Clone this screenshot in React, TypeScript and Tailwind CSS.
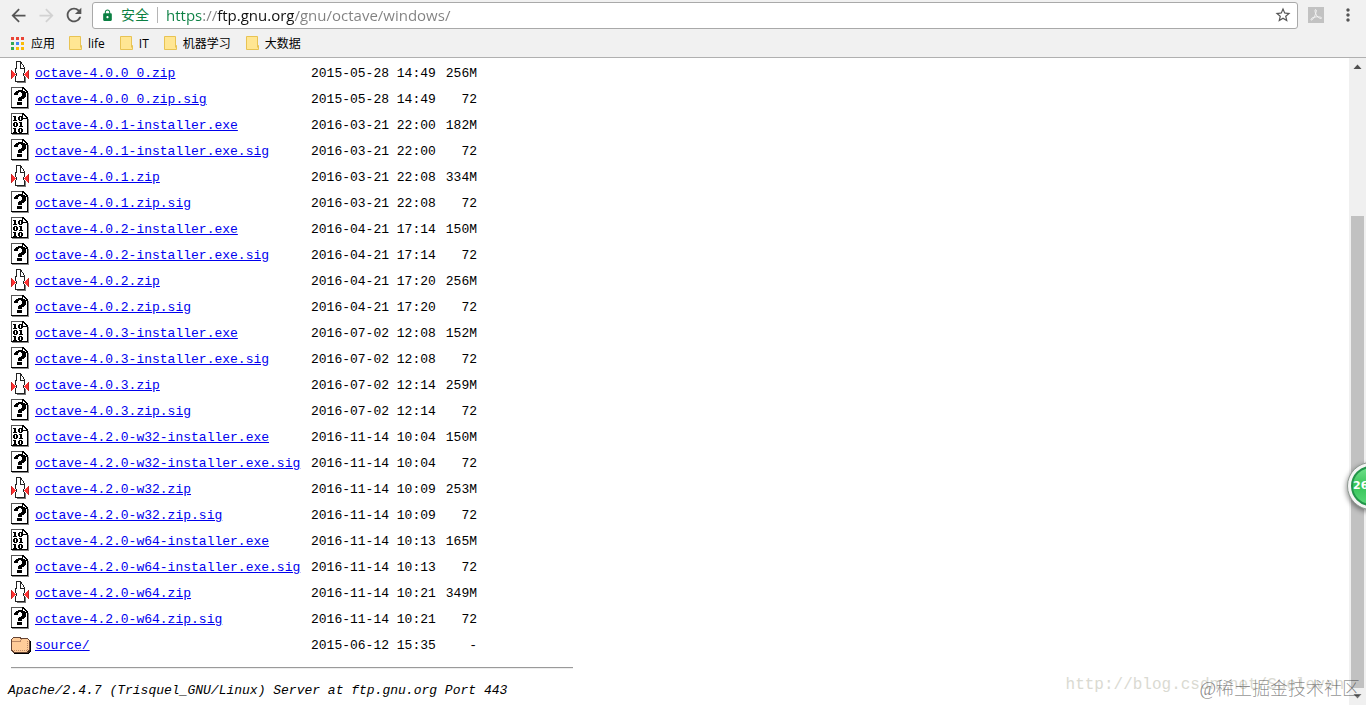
import type { ReactNode } from "react"
import { MdArrowBack, MdArrowForward, MdLock, MdMoreVert, MdRefresh, MdStarBorder } from "react-icons/md"

type Kind = "zip" | "sig" | "exe" | "dir"

interface Entry {
  name: string
  date: string
  size: string
  kind: Kind
}

const entries: Entry[] = [
  { name: "octave-4.0.0_0.zip", date: "2015-05-28 14:49", size: "256M", kind: "zip" },
  { name: "octave-4.0.0_0.zip.sig", date: "2015-05-28 14:49", size: "72", kind: "sig" },
  { name: "octave-4.0.1-installer.exe", date: "2016-03-21 22:00", size: "182M", kind: "exe" },
  { name: "octave-4.0.1-installer.exe.sig", date: "2016-03-21 22:00", size: "72", kind: "sig" },
  { name: "octave-4.0.1.zip", date: "2016-03-21 22:08", size: "334M", kind: "zip" },
  { name: "octave-4.0.1.zip.sig", date: "2016-03-21 22:08", size: "72", kind: "sig" },
  { name: "octave-4.0.2-installer.exe", date: "2016-04-21 17:14", size: "150M", kind: "exe" },
  { name: "octave-4.0.2-installer.exe.sig", date: "2016-04-21 17:14", size: "72", kind: "sig" },
  { name: "octave-4.0.2.zip", date: "2016-04-21 17:20", size: "256M", kind: "zip" },
  { name: "octave-4.0.2.zip.sig", date: "2016-04-21 17:20", size: "72", kind: "sig" },
  { name: "octave-4.0.3-installer.exe", date: "2016-07-02 12:08", size: "152M", kind: "exe" },
  { name: "octave-4.0.3-installer.exe.sig", date: "2016-07-02 12:08", size: "72", kind: "sig" },
  { name: "octave-4.0.3.zip", date: "2016-07-02 12:14", size: "259M", kind: "zip" },
  { name: "octave-4.0.3.zip.sig", date: "2016-07-02 12:14", size: "72", kind: "sig" },
  { name: "octave-4.2.0-w32-installer.exe", date: "2016-11-14 10:04", size: "150M", kind: "exe" },
  { name: "octave-4.2.0-w32-installer.exe.sig", date: "2016-11-14 10:04", size: "72", kind: "sig" },
  { name: "octave-4.2.0-w32.zip", date: "2016-11-14 10:09", size: "253M", kind: "zip" },
  { name: "octave-4.2.0-w32.zip.sig", date: "2016-11-14 10:09", size: "72", kind: "sig" },
  { name: "octave-4.2.0-w64-installer.exe", date: "2016-11-14 10:13", size: "165M", kind: "exe" },
  { name: "octave-4.2.0-w64-installer.exe.sig", date: "2016-11-14 10:13", size: "72", kind: "sig" },
  { name: "octave-4.2.0-w64.zip", date: "2016-11-14 10:21", size: "349M", kind: "zip" },
  { name: "octave-4.2.0-w64.zip.sig", date: "2016-11-14 10:21", size: "72", kind: "sig" },
  { name: "source/", date: "2015-06-12 15:35", size: "-", kind: "dir" },
]

const bookmarks = ["life", "IT", "机器学习", "大数据"]

function Page() {
  return (
    <>
      <path d="M1.5.5h11l5 5v15h-16z" fill="#fff" />
      <path d="M1.5 21V.5H13" fill="none" stroke="#555" />
      <path d="M1 20.5h16.5V5" fill="none" stroke="#000" />
      <path d="M2 21.5h16.5V6" fill="none" stroke="#888" />
      <path d="M12 0h1l5 5v1h-6z" fill="#000" />
      <path d="M13 2h1v1h1v1h1v1h-3z" fill="#fff" />
    </>
  )
}

function One({ x, y }: { x: number; y: number }) {
  return <path transform={`translate(${x} ${y})`} d="M0 0h3v4h1v1H0V4h1V1H0z" fill="#000" />
}

function Zero({ x, y }: { x: number; y: number }) {
  return (
    <path
      transform={`translate(${x} ${y})`}
      d="M1 0h3v1h1v3H4v1H1V4H0V1h1zM2 1v3h1V1z"
      fill="#000"
      fillRule="evenodd"
    />
  )
}

function FileIcon({ kind }: { kind: Kind }) {
  return (
    <svg width="21" height="22" viewBox="0 0 21 22" shapeRendering="crispEdges" className="block">
      {kind === "sig" && (
        <>
          <Page />
          <path d="M6 4h2V3h5v1h2v1h1v5h-1v1h-1v1h-2v2H8v-3h1v-1h2V9h1V6h-1V5H9v1H8v2H4V6h1V5h1zM7 15h5v3H7z" fill="#000" />
        </>
      )}
      {kind === "exe" && (
        <>
          <Page />
          <One x={3} y={3} />
          <Zero x={8} y={3} />
          <Zero x={3} y={9} />
          <One x={9} y={9} />
          <One x={3} y={15} />
          <Zero x={8} y={15} />
        </>
      )}
      {kind === "zip" && (
        <>
          <path d="M6.5.5h4l4 6v5l-1 1v2l1 1v5h-9v-5l1-1v-2l-1-1V8l1-1z" fill="#fff" stroke="#222" />
          <path d="M7 21.5h8.5V16" fill="none" stroke="#777" />
          <path d="M10.5.5v7h4" fill="none" stroke="#222" />
          <path d="M1 9h1v1h1v1h1v1h1v1h1v1H5v1H4v1H3v1H2v1H1z" fill="#f33" />
          <path d="M19 9h-1v1h-1v1h-1v1h-1v1h-1v1h1v1h1v1h1v1h1v1h1z" fill="#f33" />
          <path d="M1.5 9v9M18.5 9v9" stroke="#b22" />
        </>
      )}
      {kind === "dir" && (
        <>
          <path d="M4 20.5h14.5l2-2V8" fill="none" stroke="#000" />
          <path d="M3 6h15l2 2v10l-2 2H4z" fill="#321" />
          <path d="M1.5 6.5l2-2h6l2 1h6l1.5 1.500v10l-1.500 2h-14l-2-2z" fill="#fc9" stroke="#643" />
          <path d="M2 8.5h8l1.500-2" fill="none" stroke="#b86" />
          <path d="M4 17.500h13.500V8" fill="none" stroke="#b86" strokeDasharray="1 1" />
        </>
      )}
    </svg>
  )
}

function FolderIcon() {
  return (
    <svg width="13" height="15" viewBox="0 0 13 15" className="block shrink-0">
      <path d="M.5.5h11v9h1v4h-12z" fill="#ffe693" stroke="#e8c353" />
      <path d="M11.5 9v2.5" stroke="#e8c353" fill="none" />
    </svg>
  )
}

function AppsIcon() {
  const colors = ["#ea4335", "#ea4335", "#ea4335", "#34a853", "#4285f4", "#fbbc05", "#34a853", "#fbbc05", "#fbbc05"]
  return (
    <svg width="13" height="13" viewBox="0 0 13 13" className="block shrink-0">
      {colors.map((c, i) => (
        <rect key={i} x={(i % 3) * 5} y={Math.floor(i / 3) * 5} width="3" height="3" fill={c} />
      ))}
    </svg>
  )
}

function ToolButton({ label, children }: { label: string; children: ReactNode }) {
  return (
    <button type="button" aria-label={label} className="flex h-7 w-7 items-center justify-center">
      {children}
    </button>
  )
}

function Toolbar() {
  return (
    <div className="flex h-[30px] items-center pl-1">
      <ToolButton label="后退">
        <MdArrowBack size={21} className="text-[#555]" />
      </ToolButton>
      <ToolButton label="前进">
        <MdArrowForward size={21} className="text-[#d2d2d2]" />
      </ToolButton>
      <ToolButton label="重新加载">
        <MdRefresh size={22} className="text-[#555]" />
      </ToolButton>
      <div className="ml-1 flex h-[27px] flex-1 items-center rounded-[3px] border border-[#a9a9a9] bg-white pl-2">
        <MdLock size={13} className="text-[#0b8043]" />
        <span className="ml-[7px] text-sm text-[#0b8043]">安全</span>
        <span className="mx-2 h-4 w-px bg-[#b5b5b5]" />
        <input
          type="text"
          aria-label="地址"
          defaultValue="https://ftp.gnu.org/gnu/octave/windows/"
          className="h-6 min-w-0 flex-1 bg-[linear-gradient(to_right,#0b8043_37px,#808080_37px,#808080_51px,#111_51px,#111_128px,#808080_128px)] bg-clip-text text-[15px] text-transparent outline-none"
        />
        <button type="button" aria-label="收藏" className="mr-1 flex w-5 justify-center">
          <MdStarBorder size={18} className="text-[#555]" />
        </button>
      </div>
      <button type="button" aria-label="PDF" className="ml-2.5 block">
        <svg width="16" height="16" viewBox="0 0 16 16" className="block">
          <rect width="16" height="16" fill="#c2c2c2" />
          <path
            d="M7.5 2.500c1.500 0 .5 3 0 4.500s-2.500 6-4 6 0-2.500 3.500-3 6.500 0 6.500 1-2.500.5-4.500-2-2.500-6.500-1.500-6.500z"
            fill="none"
            stroke="#f4f4f4"
          />
        </svg>
      </button>
      <button type="button" aria-label="菜单" className="mr-2 ml-3.5 block">
        <MdMoreVert size={20} className="text-[#555]" />
      </button>
    </div>
  )
}

function Bookmarks() {
  return (
    <nav className="flex h-[27px] items-center pl-[11px] text-xs text-black">
      <a href="#apps" className="mr-3.5 flex items-center gap-[7px]">
        <AppsIcon />
        应用
      </a>
      {bookmarks.map((name) => (
        <a key={name} href={`#${name}`} className="mr-[15px] flex items-center gap-1.5">
          <FolderIcon />
          {name}
        </a>
      ))}
    </nav>
  )
}

function Listing() {
  return (
    <table className="w-[477px] table-fixed border-collapse">
      <colgroup>
        <col className="w-[35px]" />
        <col className="w-[276px]" />
        <col className="w-[129px]" />
        <col />
      </colgroup>
      <tbody>
        {entries.map((e) => (
          <tr key={e.name} className="h-[26px]">
            <td className="p-0 pb-0.5 pl-2.5">
              <FileIcon kind={e.kind} />
            </td>
            <td className="p-0 pt-0.5 whitespace-nowrap">
              <a href={`#${e.name}`} className="text-[#0000ee] underline">
                {e.name}
              </a>
            </td>
            <td className="p-0 pt-0.5 whitespace-nowrap">{e.date}</td>
            <td className="p-0 pt-0.5 text-right">{e.size}</td>
          </tr>
        ))}
      </tbody>
    </table>
  )
}

function Scrollbar() {
  return (
    <div className="flex w-[17px] shrink-0 flex-col items-center bg-[#f0f0f0]">
      <svg width="17" height="17" viewBox="0 0 17 17" className="shrink-0">
        <path d="M4.5 11l4-4.500 4 4.500z" fill="#505050" />
      </svg>
      <div className="flex-[141]" />
      <div className="w-[13px] flex-[473] bg-[#c1c1c1]" />
      <svg width="17" height="17" viewBox="0 0 17 17" className="shrink-0">
        <path d="M4.5 6l4 4.500 4-4.500z" fill="#707070" />
      </svg>
    </div>
  )
}

export default function App() {
  return (
    <div className="relative flex h-screen flex-col overflow-hidden bg-white font-['Open_Sans','Noto_Sans_CJK_SC',sans-serif]">
      <header className="shrink-0 border-b border-[#b0b0b0] bg-[#f1f1f1]">
        <Toolbar />
        <Bookmarks />
      </header>

      <div className="flex min-h-0 flex-1">
        <main className="min-w-0 flex-1 overflow-hidden pt-0.5 font-['Liberation_Mono',monospace] text-[13px] leading-5 text-black">
          <Listing />
          <hr className="mt-[9px] ml-[11px] w-[562px] border-t border-b border-t-[#9a9a9a] border-b-[#eee]" />
          <address className="mt-3 ml-2">Apache/2.4.7 (Trisquel_GNU/Linux) Server at ftp.gnu.org Port 443</address>
        </main>
        <Scrollbar />
      </div>

      {/* Floating counter, half outside the window */}
      <div className="absolute top-[462px] -right-[29px] flex h-12 w-12 items-center rounded-full border border-[#8f9a92] bg-[#f4f4f4] p-[3px] shadow-[-1px_2px_5px_rgba(0,0,0,0.4)]">
        <div className="flex h-full w-full items-center rounded-full border-2 border-[#23954a] bg-linear-to-b from-[#6ee08a] via-[#35c458] to-[#58d878] font-['DejaVu_Sans',sans-serif] text-[11px] font-bold text-white">
          26
        </div>
      </div>

      {/* Watermarks */}
      <p className="absolute right-[22px] bottom-2 font-['Liberation_Mono',monospace] text-base text-[#dadad2]">
        http://blog.csdn.net/Sueloven
      </p>
      <p className="absolute right-1.5 bottom-0.5 font-['Liberation_Serif','Noto_Sans_CJK_SC',serif] text-lg font-light text-black/45">
        @稀土掘金技术社区
      </p>
    </div>
  )
}
